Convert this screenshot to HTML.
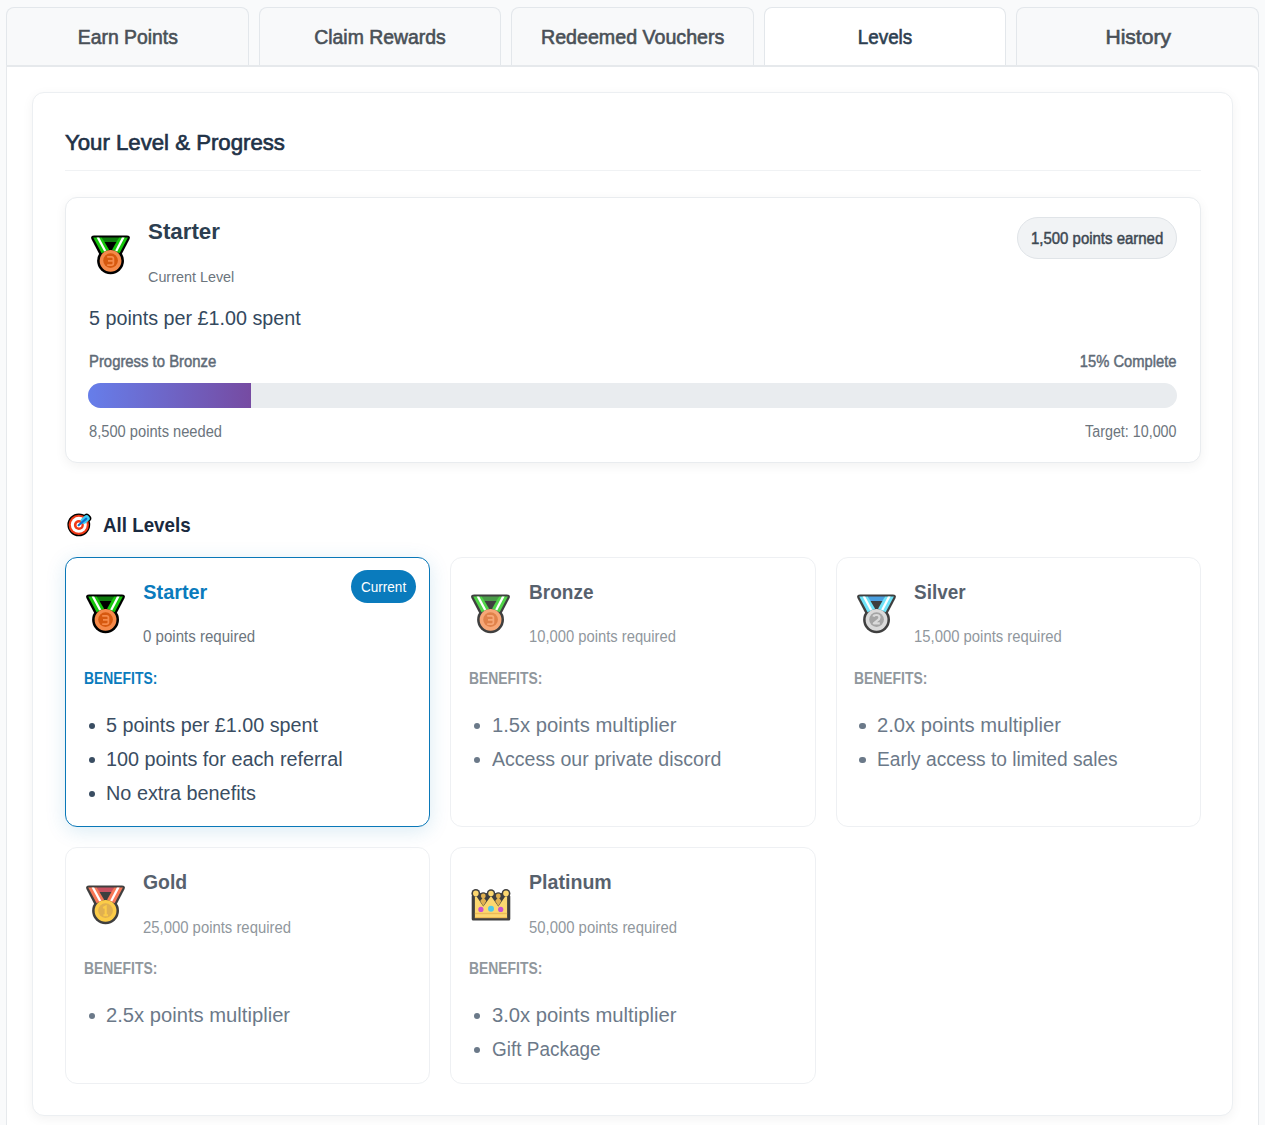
<!DOCTYPE html>
<html><head><meta charset="utf-8">
<style>
*{margin:0;padding:0;box-sizing:border-box}
html,body{width:1265px;height:1125px;overflow:hidden;background:#f9fafb;font-family:"Liberation Sans",sans-serif}
.t{position:absolute;white-space:nowrap;line-height:1.15}
.abs{position:absolute}
.tab{position:absolute;top:6.5px;height:60.5px;width:242.6px;border:1px solid #e3e7eb;border-bottom:none;border-radius:8px 8px 0 0;background:#f8f9fa}
.tab.act{background:#fff}
.card{position:absolute;background:#fff;border:1px solid #eceff2;border-radius:12px}
.lv{position:absolute;width:365.33px;background:#fff;border:1px solid #e9ecef;border-radius:12px}
</style></head><body>
<div class="tab" style="left:6px"></div>
<div class="tab" style="left:258.6px"></div>
<div class="tab" style="left:511.2px"></div>
<div class="tab act" style="left:763.8px"></div>
<div class="tab" style="left:1016.4px"></div>
<div class="abs" style="left:6px;top:65px;width:1253px;height:1100px;background:#fff;border:1px solid #e6e9ec;border-top:2px solid #e6e9ec;border-radius:0 8px 8px 8px"></div>
<div class="t" style="left:75.72px;transform-origin:51.88px 0;top:25.80px;font-size:20.07px;color:#495057;transform:scaleX(0.9647);-webkit-text-stroke:0.60px #495057;">Earn Points</div>
<div class="t" style="left:312.16px;transform-origin:68.04px 0;top:25.80px;font-size:20.07px;color:#495057;transform:scaleX(0.9671);-webkit-text-stroke:0.60px #495057;">Claim Rewards</div>
<div class="t" style="left:539.07px;transform-origin:93.73px 0;top:25.80px;font-size:20.07px;color:#495057;transform:scaleX(0.9789);-webkit-text-stroke:0.60px #495057;">Redeemed Vouchers</div>
<div class="t" style="left:856.39px;transform-origin:29.01px 0;top:25.80px;font-size:20.07px;color:#2c3e50;transform:scaleX(0.9393);-webkit-text-stroke:0.60px #2c3e50;">Levels</div>
<div class="t" style="left:1106.77px;transform-origin:31.23px 0;top:25.80px;font-size:20.07px;color:#495057;transform:scaleX(1.0504);-webkit-text-stroke:0.60px #495057;">History</div>
<div class="card" style="left:32px;top:92px;width:1201px;height:1024px;box-shadow:0 3px 12px rgba(0,0,0,0.05)"></div>
<div class="t" style="left:65.00px;transform-origin:0 0;top:129.50px;font-size:22.57px;color:#1f3247;transform:scaleX(0.9832);-webkit-text-stroke:0.68px #1f3247;">Your Level &amp; Progress</div>
<div class="abs" style="left:65px;top:170px;width:1136px;height:1px;background:#f0f2f4"></div>
<div class="card" style="left:65px;top:197px;width:1136px;height:266px;border-color:#e9ecef;box-shadow:0 3px 12px rgba(0,0,0,0.055)"></div>
<div class="abs" style="left:86px;top:230px;width:50px;height:50px"><svg width="50" height="50" viewBox="0 0 50 50">
<path d="M8.2 5.4 H40.8 Q44.9 5.4 43.6 8.9 L35.8 24 H13.2 L5.4 8.9 Q4.1 5.4 8.2 5.4 Z" fill="#000"/>
<circle cx="24.55" cy="30.8" r="13.45" fill="#000"/>
<path d="M15.8 7.5 L33 7.5 L31.4 12 L17.7 12 Z" fill="#0e7a0d"/>
<path d="M7.2 7.5 L15.8 7.5 L23.1 19.8 L15.6 23.3 Z" fill="#16c60c"/>
<path d="M10.6 7.5 L13.2 7.5 L20.2 20.6 L18.2 21.6 Z" fill="#fff"/>
<path d="M41.9 7.5 L33 7.5 L26.1 19.8 L33.6 23.3 Z" fill="#16c60c"/>
<path d="M38.6 7.5 L35.9 7.5 L29.2 20.6 L31.2 21.6 Z" fill="#fff"/>
<circle cx="24.55" cy="30.8" r="10.9" fill="#f58a4a"/>
<circle cx="24.55" cy="30.6" r="7.35" fill="#d6590f"/>
<path d="M21.2 26.8 H25.6 Q27.4 26.8 27.4 28.6 V33.3 Q27.4 35.1 25.6 35.1 H21.2 M22 30.95 H27" fill="none" stroke="#f58a4a" stroke-width="1.8"/>
</svg></div>
<div class="t" style="left:148.40px;transform-origin:0 0;top:218.90px;font-size:22.14px;font-weight:700;color:#2c3e50;transform:scaleX(1.0086);">Starter</div>
<div class="t" style="left:148.40px;transform-origin:0 0;top:268.08px;font-size:15.43px;color:#6c757d;transform:scaleX(0.9318);">Current Level</div>
<div class="abs" style="left:1017px;top:217px;width:160px;height:42px;border-radius:21px;background:#f1f3f5;border:1px solid #e0e4e8"></div>
<div class="t" style="left:1031.00px;transform-origin:0 0;top:229.56px;font-size:16.00px;color:#3d4852;transform:scaleX(0.9346);-webkit-text-stroke:0.48px #3d4852;">1,500 points earned</div>
<div class="t" style="left:88.80px;transform-origin:0 0;top:306.87px;font-size:20.00px;color:#34495e;transform:scaleX(0.9865);">5 points per £1.00 spent</div>
<div class="t" style="left:88.70px;transform-origin:0 0;top:352.75px;font-size:15.79px;color:#5f6b77;transform:scaleX(0.9421);-webkit-text-stroke:0.47px #5f6b77;">Progress to Bronze</div>
<div class="t" style="left:1073.46px;transform-origin:103.54px 0;top:352.75px;font-size:15.79px;color:#5f6b77;transform:scaleX(0.9339);-webkit-text-stroke:0.47px #5f6b77;">15% Complete</div>
<div class="abs" style="left:88px;top:383px;width:1089px;height:25px;border-radius:12.5px;background:#e9ecef;overflow:hidden"><div style="width:163.4px;height:25px;background:linear-gradient(90deg,#667eea,#764ba2)"></div></div>
<div class="t" style="left:88.70px;transform-origin:0 0;top:422.95px;font-size:15.57px;color:#6c757d;transform:scaleX(0.9431);">8,500 points needed</div>
<div class="t" style="left:1077.44px;transform-origin:99.56px 0;top:422.95px;font-size:15.57px;color:#6c757d;transform:scaleX(0.9191);">Target: 10,000</div>
<div class="abs" style="left:62px;top:508px;width:34px;height:34px"><svg width="34" height="34" viewBox="0 0 34 34">
<rect x="17" y="7.2" width="12.4" height="8.6" rx="3.6" transform="rotate(-40 23.2 11.5)" fill="#000"/>
<circle cx="16.8" cy="16.85" r="11.4" fill="#000"/>
<circle cx="16.8" cy="16.85" r="10.2" fill="#f03a17"/>
<circle cx="16.8" cy="16.85" r="8" fill="#fff"/>
<circle cx="16.9" cy="17" r="5" fill="#f03a17"/>
<circle cx="17" cy="17.1" r="2.5" fill="#fff"/>
<rect x="18.4" y="8.4" width="9.6" height="6.2" rx="2.8" transform="rotate(-40 23.2 11.5)" fill="#3ccbf4"/>
<path d="M16.6 17.2 L24.3 10.6" stroke="#0a6fd0" stroke-width="2.1" stroke-linecap="round"/>
</svg>
</div>
<div class="t" style="left:102.90px;transform-origin:0 0;top:513.80px;font-size:20.07px;font-weight:700;color:#1a2a40;transform:scaleX(0.9358);">All Levels</div>
<div class="abs" style="left:65px;top:557px;width:365.33px;height:270px;">
<div class="lv" style="left:0;top:0;height:270px;border-color:#0a78b8;box-shadow:0 4px 20px rgba(0,119,182,0.15)"></div>
<div class="abs" style="left:15.60px;top:32.20px;width:50px;height:50px"><svg width="50" height="50" viewBox="0 0 50 50">
<path d="M8.2 5.4 H40.8 Q44.9 5.4 43.6 8.9 L35.8 24 H13.2 L5.4 8.9 Q4.1 5.4 8.2 5.4 Z" fill="#000"/>
<circle cx="24.55" cy="30.8" r="13.45" fill="#000"/>
<path d="M15.8 7.5 L33 7.5 L31.4 12 L17.7 12 Z" fill="#0e7a0d"/>
<path d="M7.2 7.5 L15.8 7.5 L23.1 19.8 L15.6 23.3 Z" fill="#16c60c"/>
<path d="M10.6 7.5 L13.2 7.5 L20.2 20.6 L18.2 21.6 Z" fill="#fff"/>
<path d="M41.9 7.5 L33 7.5 L26.1 19.8 L33.6 23.3 Z" fill="#16c60c"/>
<path d="M38.6 7.5 L35.9 7.5 L29.2 20.6 L31.2 21.6 Z" fill="#fff"/>
<circle cx="24.55" cy="30.8" r="10.9" fill="#f58a4a"/>
<circle cx="24.55" cy="30.6" r="7.35" fill="#d6590f"/>
<path d="M21.2 26.8 H25.6 Q27.4 26.8 27.4 28.6 V33.3 Q27.4 35.1 25.6 35.1 H21.2 M22 30.95 H27" fill="none" stroke="#f58a4a" stroke-width="1.8"/>
</svg></div>
<div class="t" style="left:78.30px;transform-origin:0 0;top:24.00px;font-size:19.86px;font-weight:700;color:#0a7bbd;">Starter</div>
<div class="t" style="left:78.30px;transform-origin:0 0;top:70.29px;font-size:16.29px;color:#6c757d;transform:scaleX(0.9248);">0 points required</div>
<div class="t" style="left:18.70px;transform-origin:0 0;top:112.82px;font-size:15.71px;font-weight:700;color:#0a7bbd;transform:scaleX(0.8850);">BENEFITS:</div>
<div class="abs" style="left:23.50px;top:165.60px;width:6.6px;height:6.6px;border-radius:50%;background:#3a4d62"></div>
<div class="t" style="left:41.20px;transform-origin:0 0;top:156.87px;font-size:20.00px;color:#3a4d62;transform:scaleX(0.9883);">5 points per £1.00 spent</div>
<div class="abs" style="left:23.50px;top:199.60px;width:6.6px;height:6.6px;border-radius:50%;background:#3a4d62"></div>
<div class="t" style="left:41.20px;transform-origin:0 0;top:190.87px;font-size:20.00px;color:#3a4d62;transform:scaleX(0.9898);">100 points for each referral</div>
<div class="abs" style="left:23.50px;top:233.60px;width:6.6px;height:6.6px;border-radius:50%;background:#3a4d62"></div>
<div class="t" style="left:41.20px;transform-origin:0 0;top:224.87px;font-size:20.00px;color:#3a4d62;transform:scaleX(0.9921);">No extra benefits</div>
<div class="abs" style="left:286px;top:13px;width:65px;height:33px;border-radius:16.5px;background:#0a7bbd"></div>
<div class="t" style="left:296.30px;transform-origin:0 0;top:22.27px;font-size:14.14px;color:#fff;transform:scaleX(0.9584);">Current</div>
</div>
<div class="abs" style="left:450.33px;top:557px;width:365.33px;height:270px;opacity:.75;">
<div class="lv" style="left:0;top:0;height:270px"></div>
<div class="abs" style="left:15.60px;top:32.20px;width:50px;height:50px"><svg width="50" height="50" viewBox="0 0 50 50">
<path d="M8.2 5.4 H40.8 Q44.9 5.4 43.6 8.9 L35.8 24 H13.2 L5.4 8.9 Q4.1 5.4 8.2 5.4 Z" fill="#000"/>
<circle cx="24.55" cy="30.8" r="13.45" fill="#000"/>
<path d="M15.8 7.5 L33 7.5 L31.4 12 L17.7 12 Z" fill="#0e7a0d"/>
<path d="M7.2 7.5 L15.8 7.5 L23.1 19.8 L15.6 23.3 Z" fill="#16c60c"/>
<path d="M10.6 7.5 L13.2 7.5 L20.2 20.6 L18.2 21.6 Z" fill="#fff"/>
<path d="M41.9 7.5 L33 7.5 L26.1 19.8 L33.6 23.3 Z" fill="#16c60c"/>
<path d="M38.6 7.5 L35.9 7.5 L29.2 20.6 L31.2 21.6 Z" fill="#fff"/>
<circle cx="24.55" cy="30.8" r="10.9" fill="#f58a4a"/>
<circle cx="24.55" cy="30.6" r="7.35" fill="#d6590f"/>
<path d="M21.2 26.8 H25.6 Q27.4 26.8 27.4 28.6 V33.3 Q27.4 35.1 25.6 35.1 H21.2 M22 30.95 H27" fill="none" stroke="#f58a4a" stroke-width="1.8"/>
</svg></div>
<div class="t" style="left:78.30px;transform-origin:0 0;top:24.00px;font-size:19.86px;font-weight:700;color:#1e2d3d;transform:scaleX(0.9584);">Bronze</div>
<div class="t" style="left:78.30px;transform-origin:0 0;top:70.29px;font-size:16.29px;color:#6c757d;transform:scaleX(0.9070);">10,000 points required</div>
<div class="t" style="left:18.70px;transform-origin:0 0;top:112.82px;font-size:15.71px;font-weight:700;color:#6c757d;transform:scaleX(0.8850);">BENEFITS:</div>
<div class="abs" style="left:23.50px;top:165.60px;width:6.6px;height:6.6px;border-radius:50%;background:#3a4d62"></div>
<div class="t" style="left:41.20px;transform-origin:0 0;top:156.87px;font-size:20.00px;color:#3a4d62;transform:scaleX(1.0115);">1.5x points multiplier</div>
<div class="abs" style="left:23.50px;top:199.60px;width:6.6px;height:6.6px;border-radius:50%;background:#3a4d62"></div>
<div class="t" style="left:41.20px;transform-origin:0 0;top:190.87px;font-size:20.00px;color:#3a4d62;transform:scaleX(0.9776);">Access our private discord</div>
</div>
<div class="abs" style="left:835.67px;top:557px;width:365.33px;height:270px;opacity:.75;">
<div class="lv" style="left:0;top:0;height:270px"></div>
<div class="abs" style="left:16.10px;top:31.60px;width:50px;height:50px"><svg width="50" height="50" viewBox="0 0 50 50">
<path d="M8.2 5.4 H40.8 Q44.9 5.4 43.6 8.9 L35.8 24 H13.2 L5.4 8.9 Q4.1 5.4 8.2 5.4 Z" fill="#000"/>
<circle cx="24.55" cy="30.8" r="13.45" fill="#000"/>
<path d="M15.8 7.5 L33 7.5 L31.4 12 L17.7 12 Z" fill="#0e7fd6"/>
<path d="M7.2 7.5 L15.8 7.5 L23.1 19.8 L15.6 23.3 Z" fill="#3edaf7"/>
<path d="M10.6 7.5 L13.2 7.5 L20.2 20.6 L18.2 21.6 Z" fill="#fff"/>
<path d="M41.9 7.5 L33 7.5 L26.1 19.8 L33.6 23.3 Z" fill="#3edaf7"/>
<path d="M38.6 7.5 L35.9 7.5 L29.2 20.6 L31.2 21.6 Z" fill="#fff"/>
<circle cx="24.55" cy="30.8" r="10.9" fill="#cecece"/>
<circle cx="24.55" cy="30.6" r="7.35" fill="#878787"/>
<path d="M21.4 27.6 Q21.9 26 24.5 26 Q27.5 26 27.5 28.5 Q27.5 30.1 25.2 31.7 L21.8 34.4 H27.8" fill="none" stroke="#cecece" stroke-width="2.2" stroke-linejoin="round"/>
</svg></div>
<div class="t" style="left:78.30px;transform-origin:0 0;top:24.00px;font-size:19.86px;font-weight:700;color:#1e2d3d;transform:scaleX(0.9539);">Silver</div>
<div class="t" style="left:78.30px;transform-origin:0 0;top:70.29px;font-size:16.29px;color:#6c757d;transform:scaleX(0.9125);">15,000 points required</div>
<div class="t" style="left:18.70px;transform-origin:0 0;top:112.82px;font-size:15.71px;font-weight:700;color:#6c757d;transform:scaleX(0.8850);">BENEFITS:</div>
<div class="abs" style="left:23.50px;top:165.60px;width:6.6px;height:6.6px;border-radius:50%;background:#3a4d62"></div>
<div class="t" style="left:41.20px;transform-origin:0 0;top:156.87px;font-size:20.00px;color:#3a4d62;transform:scaleX(1.0093);">2.0x points multiplier</div>
<div class="abs" style="left:23.50px;top:199.60px;width:6.6px;height:6.6px;border-radius:50%;background:#3a4d62"></div>
<div class="t" style="left:41.20px;transform-origin:0 0;top:190.87px;font-size:20.00px;color:#3a4d62;transform:scaleX(0.9582);">Early access to limited sales</div>
</div>
<div class="abs" style="left:65px;top:847px;width:365.33px;height:237px;opacity:.75;">
<div class="lv" style="left:0;top:0;height:237px"></div>
<div class="abs" style="left:16.20px;top:33.20px;width:50px;height:50px"><svg width="50" height="50" viewBox="0 0 50 50">
<path d="M8.2 5.4 H40.8 Q44.9 5.4 43.6 8.9 L35.8 24 H13.2 L5.4 8.9 Q4.1 5.4 8.2 5.4 Z" fill="#000"/>
<circle cx="24.55" cy="30.8" r="13.45" fill="#000"/>
<path d="M15.8 7.5 L33 7.5 L31.4 12 L17.7 12 Z" fill="#b6162b"/>
<path d="M7.2 7.5 L15.8 7.5 L23.1 19.8 L15.6 23.3 Z" fill="#f64b20"/>
<path d="M10.6 7.5 L13.2 7.5 L20.2 20.6 L18.2 21.6 Z" fill="#fff"/>
<path d="M41.9 7.5 L33 7.5 L26.1 19.8 L33.6 23.3 Z" fill="#f64b20"/>
<path d="M38.6 7.5 L35.9 7.5 L29.2 20.6 L31.2 21.6 Z" fill="#fff"/>
<circle cx="24.55" cy="30.8" r="10.9" fill="#fbbb0b"/>
<circle cx="24.55" cy="30.6" r="7.35" fill="#d69616"/>
<path d="M22.2 28 L24.7 26.5 V35.2 M22.4 35.2 H27" fill="none" stroke="#fbbb0b" stroke-width="2.1"/>
</svg></div>
<div class="t" style="left:78.30px;transform-origin:0 0;top:24.00px;font-size:19.86px;font-weight:700;color:#1e2d3d;transform:scaleX(0.9774);">Gold</div>
<div class="t" style="left:78.30px;transform-origin:0 0;top:71.29px;font-size:16.29px;color:#6c757d;transform:scaleX(0.9132);">25,000 points required</div>
<div class="t" style="left:18.70px;transform-origin:0 0;top:112.82px;font-size:15.71px;font-weight:700;color:#6c757d;transform:scaleX(0.8850);">BENEFITS:</div>
<div class="abs" style="left:23.50px;top:165.60px;width:6.6px;height:6.6px;border-radius:50%;background:#3a4d62"></div>
<div class="t" style="left:41.20px;transform-origin:0 0;top:156.87px;font-size:20.00px;color:#3a4d62;transform:scaleX(1.0098);">2.5x points multiplier</div>
</div>
<div class="abs" style="left:450.33px;top:847px;width:365.33px;height:237px;opacity:.75;">
<div class="lv" style="left:0;top:0;height:237px"></div>
<div class="abs" style="left:15.90px;top:32.20px;width:50px;height:50px"><svg width="50" height="50" viewBox="0 0 50 50">
<path d="M7.2 40 L7.2 17.5 L9.8 14.4 L17.3 16.5 L25 14.4 L32.3 16.5 L40 14.4 L42.8 17.5 L42.8 40 Z" fill="#000" stroke="#000" stroke-width="3" stroke-linejoin="round"/>
<circle cx="9.8" cy="14.4" r="4.4" fill="#000"/><circle cx="25" cy="14.4" r="4.2" fill="#000"/><circle cx="40" cy="14.4" r="4.4" fill="#000"/>
<circle cx="17.3" cy="16.9" r="3.6" fill="#000"/><circle cx="32.3" cy="16.9" r="3.6" fill="#000"/>
<path d="M14.2 22 L17.3 18 L20.4 22 L17.3 27 Z" fill="#d69616"/>
<path d="M29.2 22 L32.3 18 L35.4 22 L32.3 27 Z" fill="#d69616"/>
<circle cx="17.3" cy="16.9" r="2.4" fill="#d69616"/><circle cx="32.3" cy="16.9" r="2.4" fill="#d69616"/>
<path d="M8.9 38.8 L8.9 17.5 L10.6 17.5 L17.3 27.5 L25 17 L32.3 27.5 L39.2 17.5 L41.1 17.5 L41.1 38.8 Z" fill="#fbca40"/>
<circle cx="9.8" cy="14.4" r="2.8" fill="#fbca40"/><circle cx="25" cy="14.4" r="2.7" fill="#fbca40"/><circle cx="40" cy="14.4" r="2.8" fill="#fbca40"/>
<rect x="8.9" y="33.8" width="32.2" height="1.4" fill="#e8a420"/>
<rect x="8.9" y="38" width="32.2" height="1.2" fill="#e8a420"/>
<circle cx="14.9" cy="30.4" r="2.6" fill="#b616c0"/><circle cx="25" cy="29.8" r="3" fill="#16b6e0"/><circle cx="34.7" cy="30.4" r="2.6" fill="#b616c0"/>
</svg></div>
<div class="t" style="left:78.30px;transform-origin:0 0;top:24.00px;font-size:19.86px;font-weight:700;color:#1e2d3d;transform:scaleX(0.9875);">Platinum</div>
<div class="t" style="left:78.30px;transform-origin:0 0;top:71.29px;font-size:16.29px;color:#6c757d;transform:scaleX(0.9132);">50,000 points required</div>
<div class="t" style="left:18.70px;transform-origin:0 0;top:112.82px;font-size:15.71px;font-weight:700;color:#6c757d;transform:scaleX(0.8850);">BENEFITS:</div>
<div class="abs" style="left:23.50px;top:165.60px;width:6.6px;height:6.6px;border-radius:50%;background:#3a4d62"></div>
<div class="t" style="left:41.20px;transform-origin:0 0;top:156.87px;font-size:20.00px;color:#3a4d62;transform:scaleX(1.0115);">3.0x points multiplier</div>
<div class="abs" style="left:23.50px;top:199.60px;width:6.6px;height:6.6px;border-radius:50%;background:#3a4d62"></div>
<div class="t" style="left:41.20px;transform-origin:0 0;top:190.87px;font-size:20.00px;color:#3a4d62;transform:scaleX(0.9476);">Gift Package</div>
</div>
</body></html>
